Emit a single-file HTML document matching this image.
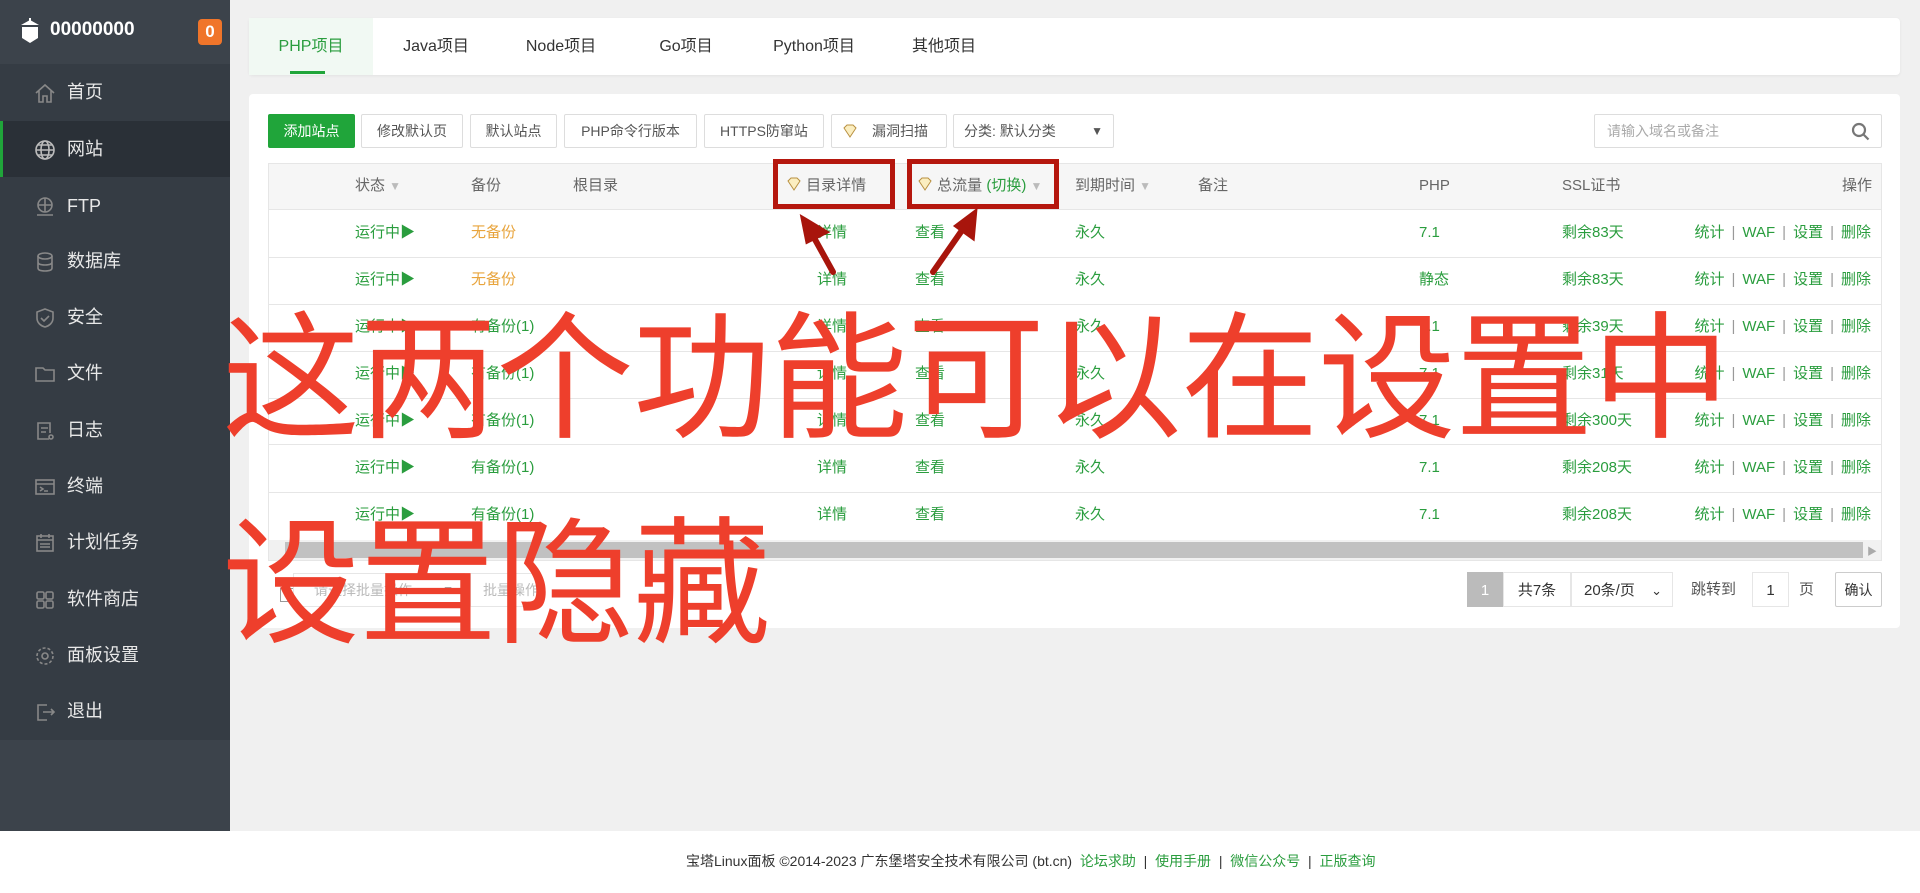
<!DOCTYPE html>
<html><head><meta charset="utf-8"><style>
*{margin:0;padding:0;box-sizing:border-box}
body{width:1920px;height:893px;background:#f0f0f0;font-family:"Liberation Sans","Noto Sans CJK SC",sans-serif;position:relative;overflow:hidden;color:#333}
.a{position:absolute;white-space:nowrap}
#side{position:absolute;left:0;top:0;width:230px;height:893px;background:#3c434b}
#menu{position:absolute;left:0;top:64px;width:230px;height:676px;background:#353c44}
.mi{position:absolute;left:0;width:230px;height:56px;line-height:56px;color:#e8e8e8;font-size:18px;padding-left:67px}
.mi svg{position:absolute;left:34px;top:18px}
.act{background:#2a3037;border-left:3px solid #20a53a;padding-left:64px}
.act svg{left:31px}
.card{position:absolute;background:#fff;border-radius:4px}
.tab{position:absolute;top:18px;height:57px;line-height:57px;font-size:16px;color:#333;text-align:center}
.btn{position:absolute;top:114px;height:34px;line-height:32px;border:1px solid #ddd;border-radius:2px;font-size:14px;color:#555;text-align:center;background:#fff;white-space:nowrap}
.th{position:absolute;top:163px;height:46px;line-height:46px;font-size:15px;color:#666;white-space:nowrap}
.g{color:#2a9d3e}.o{color:#e8a43c}
.row{position:absolute;left:268px;width:1614px;height:1px;background:#e6e6e6}
.cell{position:absolute;font-size:15px;line-height:20px;white-space:nowrap}
.op{position:absolute;right:49px;font-size:15px;line-height:20px;white-space:nowrap;color:#2a9d3e}
.op i{font-style:normal;color:#999;margin:0 7px}
.red{position:absolute;border:5px solid #b5170e}
.big{position:absolute;left:222px;font-size:138px;line-height:138px;color:#ee3f2c;font-family:"Noto Sans CJK SC",sans-serif;letter-spacing:-1px;white-space:nowrap}
.pg{position:absolute;top:572px;height:35px;line-height:35px;font-size:15px;text-align:center;border:1px solid #e6e6e6;background:#fff}
</style></head><body>
<div id="side">
 <div class="a" style="left:18px;top:18px;width:24px;height:26px">
  <svg width="24" height="26" viewBox="0 0 24 26"><path d="M4 9 L20 9 L20 20 L12 25 L4 20Z" fill="#fff"/><path d="M3 7 L12 2 L21 7Z" fill="#fff"/><path d="M12 0v4" stroke="#fff" stroke-width="2"/></svg></div>
 <div class="a" style="left:50px;top:19px;font-size:19px;font-weight:bold;color:#fff">00000000</div>
 <div class="a" style="left:198px;top:19px;width:24px;height:26px;background:#f0752a;border-radius:4px;color:#fff;font-weight:bold;text-align:center;line-height:26px;font-size:17px">0</div>
 <div id="menu"></div>
</div>
<div class="mi" style="top:64px"><svg width="22" height="22" viewBox="0 0 22 22" fill="none" stroke="#888" stroke-width="1.6"><path d="M2 11 L11 3 L20 11 M5 9v11h4v-6h4v6h4V9"/></svg>首页</div>
<div class="mi act" style="top:121px"><svg width="22" height="22" viewBox="0 0 22 22" fill="none" stroke="#bbb" stroke-width="1.6"><circle cx="11" cy="11" r="9"/><ellipse cx="11" cy="11" rx="4" ry="9"/><path d="M2 11h18M4 6h14M4 16h14"/></svg>网站</div>
<div class="mi" style="top:178px"><svg width="22" height="22" viewBox="0 0 22 22" fill="none" stroke="#888" stroke-width="1.6"><circle cx="11" cy="9" r="7"/><path d="M4 9h14M11 2v14M3 19h16"/></svg>FTP</div>
<div class="mi" style="top:233px"><svg width="22" height="22" viewBox="0 0 22 22" fill="none" stroke="#888" stroke-width="1.6"><ellipse cx="11" cy="5" rx="7" ry="3"/><path d="M4 5v12c0 2 3 3 7 3s7-1 7-3V5M4 11c0 2 3 3 7 3s7-1 7-3"/></svg>数据库</div>
<div class="mi" style="top:289px"><svg width="22" height="22" viewBox="0 0 22 22" fill="none" stroke="#888" stroke-width="1.6"><path d="M11 2 L19 5v6c0 5-4 8-8 9-4-1-8-4-8-9V5Z M7 11l3 3 5-5"/></svg>安全</div>
<div class="mi" style="top:345px"><svg width="22" height="22" viewBox="0 0 22 22" fill="none" stroke="#888" stroke-width="1.6"><path d="M2 5h7l2 2h9v11H2Z"/></svg>文件</div>
<div class="mi" style="top:402px"><svg width="22" height="22" viewBox="0 0 22 22" fill="none" stroke="#888" stroke-width="1.6"><path d="M15 19H4V3h12v10M7 8h7M7 12h5"/><circle cx="17" cy="17" r="2"/></svg>日志</div>
<div class="mi" style="top:458px"><svg width="22" height="22" viewBox="0 0 22 22" fill="none" stroke="#888" stroke-width="1.6"><rect x="2" y="4" width="18" height="14"/><path d="M2 8h18M6 11l3 2-3 2M10 15h4"/></svg>终端</div>
<div class="mi" style="top:514px"><svg width="22" height="22" viewBox="0 0 22 22" fill="none" stroke="#888" stroke-width="1.6"><rect x="3" y="4" width="16" height="15"/><path d="M3 8h16M7 2v4M15 2v4M6 12h10M6 15h10"/></svg>计划任务</div>
<div class="mi" style="top:571px"><svg width="22" height="22" viewBox="0 0 22 22" fill="none" stroke="#888" stroke-width="1.6"><rect x="3" y="3" width="7" height="7" rx="1.5"/><rect x="12" y="3" width="7" height="7" rx="1.5"/><rect x="3" y="12" width="7" height="7" rx="1.5"/><rect x="12" y="12" width="7" height="7" rx="1.5"/></svg>软件商店</div>
<div class="mi" style="top:627px"><svg width="22" height="22" viewBox="0 0 22 22" fill="none" stroke="#888" stroke-width="1.6"><circle cx="11" cy="11" r="3"/><circle cx="11" cy="11" r="8" stroke-dasharray="3 2"/></svg>面板设置</div>
<div class="mi" style="top:683px"><svg width="22" height="22" viewBox="0 0 22 22" fill="none" stroke="#888" stroke-width="1.6"><path d="M13 4H4v15h9M9 11h11M17 8l3 3-3 3"/></svg>退出</div>

<div class="card" style="left:249px;top:18px;width:1651px;height:57px;box-shadow:0 1px 3px rgba(0,0,0,.06)"></div>
<div class="a" style="left:249px;top:18px;width:124px;height:57px;background:#f1f9f3"></div>
<div class="a" style="left:290px;top:71px;width:35px;height:3px;background:#20a53a"></div>
<div class="tab g" style="left:249px;width:124px">PHP项目</div>
<div class="tab" style="left:386px;width:100px">Java项目</div>
<div class="tab" style="left:511px;width:100px">Node项目</div>
<div class="tab" style="left:636px;width:100px">Go项目</div>
<div class="tab" style="left:764px;width:100px">Python项目</div>
<div class="tab" style="left:894px;width:100px">其他项目</div>

<div class="card" style="left:249px;top:94px;width:1651px;height:534px"></div>
<div class="btn" style="left:268px;width:87px;background:#20a53a;border-color:#20a53a;color:#fff">添加站点</div>
<div class="btn" style="left:361px;width:102px">修改默认页</div>
<div class="btn" style="left:470px;width:87px">默认站点</div>
<div class="btn" style="left:564px;width:133px">PHP命令行版本</div>
<div class="btn" style="left:704px;width:120px">HTTPS防窜站</div>
<div class="btn" style="left:831px;width:116px;padding-left:22px"><svg class="a" style="left:10px;top:8px" width="16" height="16" viewBox="0 0 16 16" fill="#fbeec0" stroke="#b89040"><path d="M2 5l3-3h6l3 3-6 9Z"/></svg>漏洞扫描</div>
<div class="btn" style="left:953px;width:161px;text-align:left;padding-left:10px">分类: 默认分类<span class="a" style="right:10px;top:0;color:#555;font-size:12px">▼</span></div>
<div class="btn" style="left:1594px;width:288px;text-align:left;padding-left:12px;color:#aaa">请输入域名或备注<svg class="a" style="right:10px;top:7px" width="20" height="20" viewBox="0 0 20 20" fill="none" stroke="#777" stroke-width="2.2"><circle cx="8" cy="8" r="6"/><path d="M12.5 12.5l5 5"/></svg></div>

<div class="a" style="left:268px;top:163px;width:1614px;height:398px;border:1px solid #e6e6e6"></div>
<div class="a" style="left:269px;top:164px;width:1612px;height:45px;background:#f6f6f6"></div>
<div class="th" style="left:355px">状态 <span style="color:#bbb;font-size:12px">▼</span></div>
<div class="th" style="left:471px">备份</div>
<div class="th" style="left:573px">根目录</div>
<div class="th" style="left:786px"><svg width="16" height="16" viewBox="0 0 16 16" fill="#fbeec0" stroke="#b89040" style="vertical-align:-2px"><path d="M2 5l3-3h6l3 3-6 9Z"/></svg> 目录详情</div>
<div class="th" style="left:917px"><svg width="16" height="16" viewBox="0 0 16 16" fill="#fbeec0" stroke="#b89040" style="vertical-align:-2px"><path d="M2 5l3-3h6l3 3-6 9Z"/></svg> 总流量 <span class="g">(切换)</span> <span style="color:#bbb;font-size:12px">▼</span></div>
<div class="th" style="left:1075px">到期时间 <span style="color:#bbb;font-size:12px">▼</span></div>
<div class="th" style="left:1198px">备注</div>
<div class="th" style="left:1419px">PHP</div>
<div class="th" style="left:1562px">SSL证书</div>
<div class="th" style="left:1842px">操作</div>

<div class="row" style="top:209px"></div><div class="row" style="top:257px"></div><div class="row" style="top:304px"></div><div class="row" style="top:351px"></div><div class="row" style="top:398px"></div><div class="row" style="top:444px"></div><div class="row" style="top:492px"></div>
<div class="a" style="left:269px;top:540px;width:1612px;height:20px;background:#f1f1f1"></div>
<div class="a" style="left:285px;top:542px;width:1578px;height:16px;background:#c1c1c1"></div>
<div class="a" style="left:1867px;top:543px;color:#aaa;font-size:10px">▶</div>

<div class="cell g" style="left:355px;top:223px">运行中▶</div><div class="cell o" style="left:471px;top:223px">无备份</div><div class="cell g" style="left:817px;top:223px">详情</div><div class="cell g" style="left:915px;top:223px">查看</div><div class="cell g" style="left:1075px;top:223px">永久</div><div class="cell g" style="left:1419px;top:223px">7.1</div><div class="cell g" style="left:1562px;top:223px">剩余83天</div><div class="op" style="top:223px">统计<i>|</i>WAF<i>|</i>设置<i>|</i>删除</div>
<div class="cell g" style="left:355px;top:270px">运行中▶</div><div class="cell o" style="left:471px;top:270px">无备份</div><div class="cell g" style="left:817px;top:270px">详情</div><div class="cell g" style="left:915px;top:270px">查看</div><div class="cell g" style="left:1075px;top:270px">永久</div><div class="cell g" style="left:1419px;top:270px">静态</div><div class="cell g" style="left:1562px;top:270px">剩余83天</div><div class="op" style="top:270px">统计<i>|</i>WAF<i>|</i>设置<i>|</i>删除</div>
<div class="cell g" style="left:355px;top:317px">运行中▶</div><div class="cell g" style="left:471px;top:317px">有备份(1)</div><div class="cell g" style="left:817px;top:317px">详情</div><div class="cell g" style="left:915px;top:317px">查看</div><div class="cell g" style="left:1075px;top:317px">永久</div><div class="cell g" style="left:1419px;top:317px">7.1</div><div class="cell g" style="left:1562px;top:317px">剩余39天</div><div class="op" style="top:317px">统计<i>|</i>WAF<i>|</i>设置<i>|</i>删除</div>
<div class="cell g" style="left:355px;top:364px">运行中▶</div><div class="cell g" style="left:471px;top:364px">有备份(1)</div><div class="cell g" style="left:817px;top:364px">详情</div><div class="cell g" style="left:915px;top:364px">查看</div><div class="cell g" style="left:1075px;top:364px">永久</div><div class="cell g" style="left:1419px;top:364px">7.1</div><div class="cell g" style="left:1562px;top:364px">剩余31天</div><div class="op" style="top:364px">统计<i>|</i>WAF<i>|</i>设置<i>|</i>删除</div>
<div class="cell g" style="left:355px;top:411px">运行中▶</div><div class="cell g" style="left:471px;top:411px">有备份(1)</div><div class="cell g" style="left:817px;top:411px">详情</div><div class="cell g" style="left:915px;top:411px">查看</div><div class="cell g" style="left:1075px;top:411px">永久</div><div class="cell g" style="left:1419px;top:411px">7.1</div><div class="cell g" style="left:1562px;top:411px">剩余300天</div><div class="op" style="top:411px">统计<i>|</i>WAF<i>|</i>设置<i>|</i>删除</div>
<div class="cell g" style="left:355px;top:458px">运行中▶</div><div class="cell g" style="left:471px;top:458px">有备份(1)</div><div class="cell g" style="left:817px;top:458px">详情</div><div class="cell g" style="left:915px;top:458px">查看</div><div class="cell g" style="left:1075px;top:458px">永久</div><div class="cell g" style="left:1419px;top:458px">7.1</div><div class="cell g" style="left:1562px;top:458px">剩余208天</div><div class="op" style="top:458px">统计<i>|</i>WAF<i>|</i>设置<i>|</i>删除</div>
<div class="cell g" style="left:355px;top:505px">运行中▶</div><div class="cell g" style="left:471px;top:505px">有备份(1)</div><div class="cell g" style="left:817px;top:505px">详情</div><div class="cell g" style="left:915px;top:505px">查看</div><div class="cell g" style="left:1075px;top:505px">永久</div><div class="cell g" style="left:1419px;top:505px">7.1</div><div class="cell g" style="left:1562px;top:505px">剩余208天</div><div class="op" style="top:505px">统计<i>|</i>WAF<i>|</i>设置<i>|</i>删除</div>

<div class="a" style="left:280px;top:588px;width:14px;height:14px;border:1px solid #999;background:#fff"></div>
<div class="a" style="left:293px;top:573px;width:172px;height:34px;border:1px solid #e6e6e6;color:#bbb;font-size:14px;line-height:32px;padding-left:20px">请选择批量操作<span class="a" style="right:10px;color:#999;font-size:12px">▼</span></div>
<div class="a" style="left:470px;top:573px;width:70px;height:34px;border:1px solid #e6e6e6;color:#bbb;font-size:14px;line-height:32px;padding-left:12px">批量操作</div>

<div class="pg" style="left:1467px;width:36px;background:#bbb;border-color:#bbb;color:#fff">1</div>
<div class="pg" style="left:1503px;width:68px">共7条</div>
<div class="pg" style="left:1571px;width:102px;text-align:left;padding-left:12px">20条/页<span class="a" style="right:10px;font-size:13px">⌄</span></div>
<div class="a" style="left:1691px;top:572px;line-height:35px;font-size:15px;color:#555">跳转到</div>
<div class="pg" style="left:1752px;width:37px">1</div>
<div class="a" style="left:1799px;top:572px;line-height:35px;font-size:15px;color:#555">页</div>
<div class="pg" style="left:1835px;width:47px;border-color:#ccc;border-radius:2px;font-size:14px">确认</div>

<div class="a" style="left:0;top:831px;width:1920px;height:62px;background:#fff"></div>
<div class="a" style="left:686px;top:851px;font-size:14px;line-height:20px;color:#333">宝塔Linux面板 ©2014-2023 广东堡塔安全技术有限公司 (bt.cn)&nbsp;&nbsp;<span class="g">论坛求助</span>&nbsp;&nbsp;|&nbsp;&nbsp;<span class="g">使用手册</span>&nbsp;&nbsp;|&nbsp;&nbsp;<span class="g">微信公众号</span>&nbsp;&nbsp;|&nbsp;&nbsp;<span class="g">正版查询</span></div>

<div class="red" style="left:773px;top:159px;width:122px;height:50px"></div>
<div class="red" style="left:907px;top:159px;width:152px;height:50px"></div>
<svg class="a" style="left:0;top:0" width="1920" height="893"><g stroke="#a8150c" stroke-width="6" fill="#a8150c" stroke-linecap="round"><path d="M833 272 L812 234"/><path d="M804 220 L824 232 L808 240Z"/><path d="M933 272 L965 226"/><path d="M974 214 L972 236 L958 226Z"/></g></svg>

<div class="big" style="top:298px">这两个功能可以在设置中</div>
<div class="big" style="top:503px">设置隐藏</div>
</body></html>
